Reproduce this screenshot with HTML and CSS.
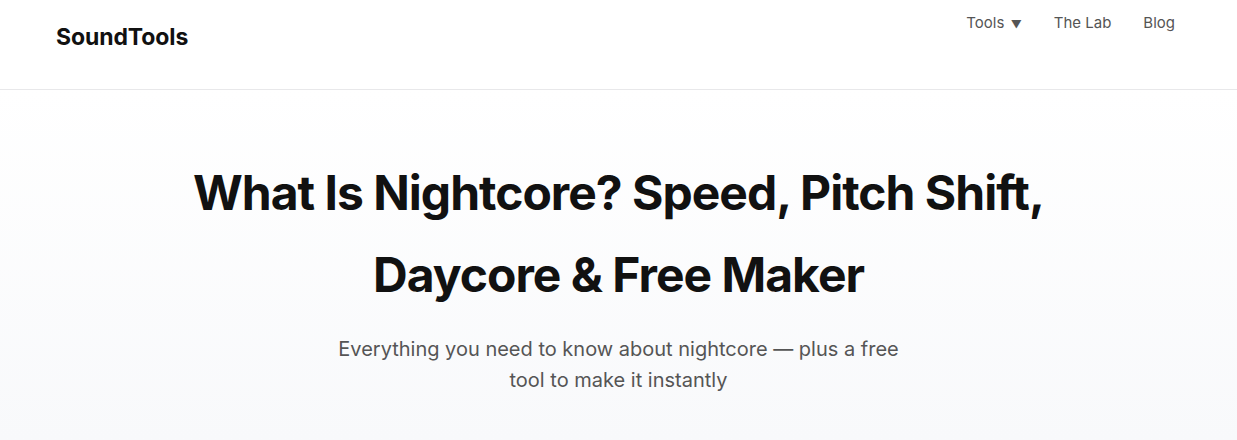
FILE: index.html
```html
<!DOCTYPE html>
<html lang="en">
<head>
<meta charset="utf-8">
<title>What Is Nightcore?</title>
<link rel="stylesheet" href="styles.css">
</head>
<body>
<header class="site-header">
  <a class="logo" href="#">SoundTools</a>
  <nav class="nav">
    <a class="nav-link" href="#">Tools <span class="caret">▼</span></a>
    <a class="nav-link" href="#">The Lab</a>
    <a class="nav-link" href="#">Blog</a>
  </nav>
</header>
<section class="hero">
  <h1 class="hero-title">What Is Nightcore? Speed, Pitch Shift, Daycore &amp; Free Maker</h1>
  <p class="hero-sub">Everything you need to know about nightcore — plus a free tool to make it instantly</p>
</section>
</body>
</html>
```
FILE: styles.css
```css
* { box-sizing: border-box; }
html, body { margin: 0; padding: 0; }
body {
  font-family: Inter, "Noto Sans", sans-serif;
  background: #fff;
  color: #111;
}
a { text-decoration: none; color: inherit; }
.site-header {
  height: 90px;
  display: flex;
  justify-content: space-between;
  align-items: flex-start;
  padding: 0 62px 0 56px;
  border-bottom: 1px solid #e8e8ea;
}
.logo {
  font-size: 23px;
  font-weight: 700;
  color: #111;
  margin-top: 23px;
  letter-spacing: -0.1px;
}
.nav {
  display: flex;
  gap: 32px;
  margin-top: 12px;
}
.nav-link {
  font-size: 15px;
  color: #555;
  line-height: 22px;
}
.caret { font-size: 11px; margin-left: 2px; }
.hero {
  height: 350px;
  background: linear-gradient(180deg, #ffffff 0%, #f8f9fb 100%);
  display: flex;
  flex-direction: column;
  align-items: center;
  padding-top: 62px;
}
.hero-title {
  margin: 0;
  max-width: 900px;
  text-align: center;
  font-size: 48px;
  font-weight: 700;
  line-height: 82px;
  letter-spacing: -1px;
  color: #111;
}
.hero-sub {
  margin: 18px 0 0;
  max-width: 580px;
  text-align: center;
  font-size: 20px;
  line-height: 31px;
  color: #555;
}
```
